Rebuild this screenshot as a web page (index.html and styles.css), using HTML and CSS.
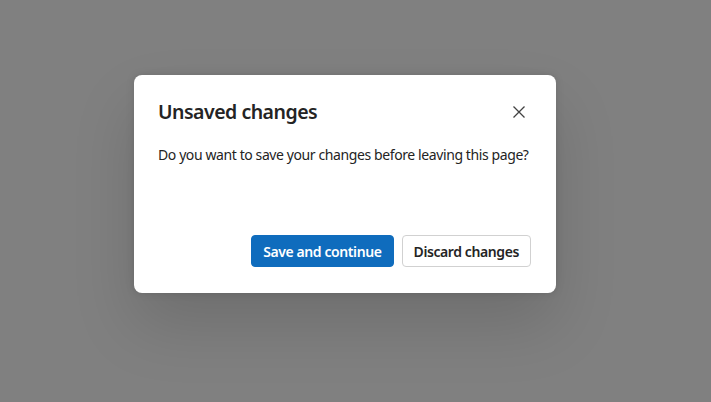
FILE: index.html
```html
<!DOCTYPE html>
<html lang="en">
<head>
    <meta charset="UTF-8">
    <link rel="stylesheet" href="styles.css">
    <title>Unsaved changes</title>
</head>
<body>
<div class="dialog">
    <div class="dialog-head">
        <h2 class="dialog-title">Unsaved changes</h2>
        <button class="close-btn" aria-label="Close">
            <svg width="20" height="20" viewBox="0 0 20 20">
                <path d="M4.5 4.5 L15.5 15.5 M15.5 4.5 L4.5 15.5" stroke="#424242" stroke-width="1.3" fill="none"/>
            </svg>
        </button>
    </div>
    <p class="dialog-body">Do you want to save your changes before leaving this page?</p>
    <div class="dialog-actions">
        <button class="btn btn-primary">Save and continue</button>
        <button class="btn btn-secondary">Discard changes</button>
    </div>
</div>
</body>
</html>
```
FILE: styles.css
```css
html, body {
    margin: 0;
    height: 100%;
}
body {
    background: #808080;
    font-family: "Noto Sans", "Open Sans", sans-serif;
    color: #242424;
    padding: 75px 0 0 134px;
    box-sizing: border-box;
}
.dialog {
    width: 422px;
    height: 218px;
    box-sizing: border-box;
    background: #fff;
    border-radius: 8px;
    padding: 24px 24px 26px;
    display: flex;
    flex-direction: column;
    box-shadow: 0 0 8px rgba(0, 0, 0, 0.12), 0 32px 64px rgba(0, 0, 0, 0.14);
}
.dialog-head {
    display: flex;
    align-items: center;
    justify-content: space-between;
    height: 26px;
}
.dialog-title {
    margin: 0;
    font-size: 19.5px;
    font-weight: 600;
    line-height: 26px;
    letter-spacing: -0.5px;
}
.close-btn {
    border: none;
    background: none;
    padding: 0;
    width: 32px;
    height: 32px;
    margin-right: -3px;
    display: flex;
    align-items: center;
    justify-content: center;
    cursor: pointer;
}
.dialog-body {
    margin: 20px 0 0;
    font-size: 14px;
    line-height: 20px;
    letter-spacing: -0.4px;
    white-space: nowrap;
}
.dialog-actions {
    margin-top: auto;
    display: flex;
    justify-content: flex-end;
    gap: 8px;
    margin-right: 1px;
}
.btn {
    height: 32px;
    padding: 0 11px;
    border-radius: 4px;
    font-family: inherit;
    font-size: 14px;
    font-weight: 600;
    letter-spacing: -0.4px;
    cursor: pointer;
}
.btn-primary {
    background: #0f6cbd;
    border: 1px solid #0f6cbd;
    color: #fff;
}
.btn-secondary {
    background: #fff;
    border: 1px solid #d1d1d1;
    color: #242424;
}
```
